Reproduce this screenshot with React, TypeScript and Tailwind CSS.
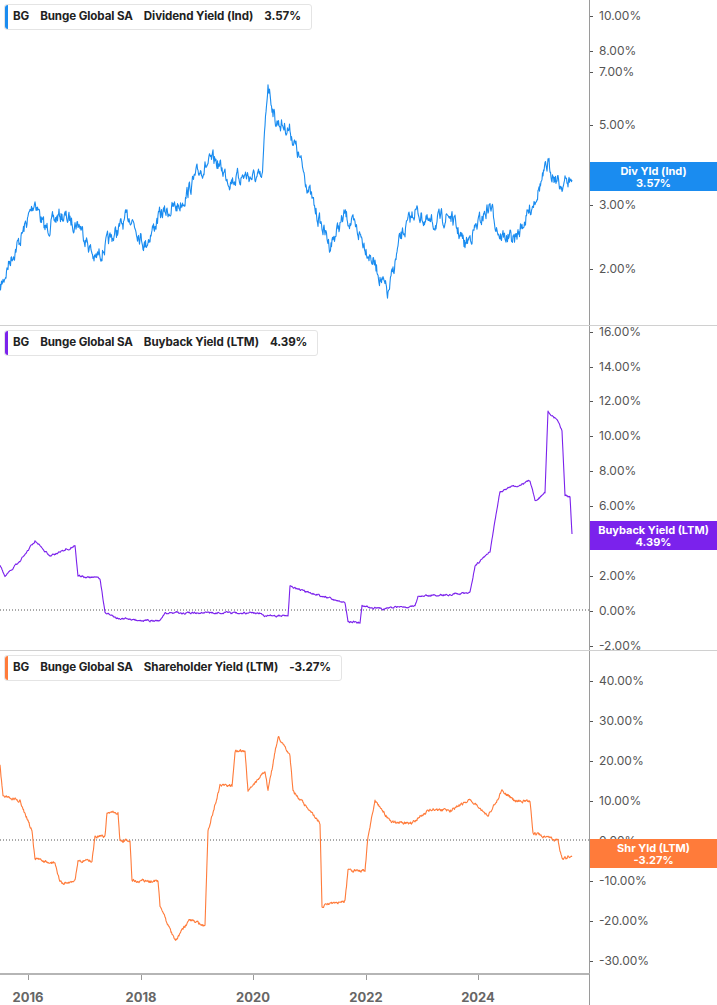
import React from "react";

function rng(seed: number) {
  let s = seed;
  return () => {
    s = (s * 16807) % 2147483647;
    return s / 2147483647;
  };
}

function buildPath(pts: number[][], noise: number, seed: number, keep: number) {
  const r = rng(seed);
  const out: string[] = [];
  let walk = 0;
  for (let i = 0; i < pts.length - 1; i++) {
    const [x0, y0] = pts[i];
    const [x1, y1] = pts[i + 1];
    const steps = Math.max(1, Math.round((x1 - x0) * 2));
    for (let k = 0; k < steps; k++) {
      const t = k / steps;
      walk = walk * keep + (r() - 0.5) * noise;
      const x = x0 + (x1 - x0) * t;
      const y = y0 + (y1 - y0) * t + walk;
      out.push(`${out.length ? "L" : "M"}${x.toFixed(1)},${y.toFixed(1)}`);
    }
  }
  const l = pts[pts.length - 1];
  out.push(`L${l[0]},${l[1]}`);
  return out.join(" ");
}

const p1 = [[0,290],[10,260],[20,240],[35,200],[45,230],[60,215],[80,225],[95,260],[110,240],[130,215],[145,245],[160,215],[180,205],[200,170],[215,160],[230,180],[245,175],[262,180],[268,82],[275,120],[290,130],[300,160],[315,210],[330,245],[345,215],[360,235],[375,265],[388,295],[400,240],[415,210],[430,225],[450,215],[465,245],[490,205],[500,235],[515,240],[530,210],[548,165],[560,185],[572,180]];
const p2 = [[0,565],[5,575],[20,560],[35,540],[50,555],[75,545],[78,575],[100,578],[105,612],[120,618],[160,620],[165,612],[260,612],[265,615],[288,615],[290,585],[310,592],[330,597],[345,602],[348,620],[360,622],[362,605],[380,608],[415,605],[418,595],[470,592],[475,565],[490,550],[500,490],[515,485],[530,480],[535,500],[545,492],[548,410],[558,420],[562,430],[565,495],[570,495],[572,533]].map(([x,y])=>[x,y-325]);
const p3 = [[0,765],[3,795],[20,800],[32,830],[35,858],[55,862],[60,882],[75,880],[78,860],[92,860],[95,835],[105,835],[107,812],[118,812],[120,840],[130,840],[132,880],[158,880],[160,905],[175,940],[190,918],[205,925],[208,830],[220,785],[232,785],[235,750],[245,750],[248,790],[265,770],[268,790],[278,735],[290,755],[293,790],[320,822],[322,905],[345,900],[348,870],[365,870],[368,835],[375,800],[390,820],[410,823],[430,808],[450,810],[470,798],[488,815],[502,790],[515,800],[530,800],[533,832],[558,840],[562,858],[572,855]].map(([x,y])=>[x,y-650]);

type Panel = {
  h: number; color: string; title: string; val: string; badge: string; badgeTop: number;
  labels: [string, number][]; pts: number[][]; noise: number; keep: number; zero?: number;
};

const panels: Panel[] = [
  { h: 325, color: "#1a8cf0", title: "Dividend Yield (Ind)", val: "3.57%", badge: "Div Yld (Ind)", badgeTop: 162,
    labels: [["10.00%",15],["8.00%",50],["7.00%",71],["5.00%",124],["3.00%",204],["2.00%",268]], pts: p1, noise: 12, keep: 0.6 },
  { h: 325, color: "#7b22ec", title: "Buyback Yield (LTM)", val: "4.39%", badge: "Buyback Yield (LTM)", badgeTop: 195,
    labels: [["16.00%",5],["14.00%",40],["12.00%",74],["10.00%",109],["8.00%",144],["6.00%",179],["4.00%",214],["2.00%",249],["0.00%",284],["-2.00%",319]], pts: p2, noise: 1.5, keep: 0.7, zero: 284 },
  { h: 323, color: "#ff7b3a", title: "Shareholder Yield (LTM)", val: "-3.27%", badge: "Shr Yld (LTM)", badgeTop: 188,
    labels: [["40.00%",29],["30.00%",69],["20.00%",109],["10.00%",149],["0.00%",189],["-10.00%",229],["-20.00%",269],["-30.00%",309]], pts: p3, noise: 2.5, keep: 0.5, zero: 189 },
];

export default function App() {
  return (
    <div className="w-[717px] h-[1005px] bg-white overflow-hidden" style={{ fontFamily: "Inter, 'Liberation Sans', sans-serif" }}>
      {panels.map((p, i) => (
        <div key={i} className={`flex ${i > 0 ? "border-t border-[#d0d0d0]" : ""}`} style={{ height: p.h }}>
          <div className="relative w-[590px] border-r border-[#9a9a9a]">
            <svg className="absolute inset-0" width={590} height={p.h}>
              {p.zero !== undefined && <line x1={0} x2={590} y1={p.zero} y2={p.zero} stroke="#555" strokeDasharray="1 2" strokeWidth={1} />}
              <path d={buildPath(p.pts, p.noise, 7 + i * 13, p.keep)} fill="none" stroke={p.color} strokeWidth={1.1} strokeLinejoin="round" />
            </svg>
            <div className="absolute left-[4px] top-[4px] flex items-center h-[26px] bg-white border border-[#e4e4e4] rounded-[3px] pr-[10px] text-[11.6px] font-bold text-[#222] gap-[11px] tracking-[-0.1px]">
              <div className="w-[3px] h-full rounded-l-[3px] -mr-[6px]" style={{ background: p.color }} />
              <span>BG</span>
              <span>Bunge Global SA</span>
              <span>{p.title}</span>
              <span>{p.val}</span>
            </div>
          </div>
          <div className="relative flex-1">
            {p.labels.map(([t, y]) => (
              <div key={t} className="absolute left-0 flex items-center text-[12px] text-[#555]" style={{ top: y - 8 }}>
                <div className="w-[3px] h-[1px] bg-[#555] mr-[6px]" />
                {t}
              </div>
            ))}
            <div className="absolute left-0 right-0 h-[29px] flex flex-col items-center justify-center text-white text-[11px] font-bold leading-[12px]" style={{ top: p.badgeTop, background: p.color }}>
              <span>{p.badge}</span>
              <span>{p.val}</span>
            </div>
          </div>
        </div>
      ))}
      <div className="flex h-[32px]">
        <div className="relative w-[590px] border-t-2 border-r border-[#b5b5b5] border-r-[#9a9a9a] text-[13px] font-bold text-[#666]">
          {[["2016",28],["2018",141],["2020",253],["2022",366],["2024",478]].map(([t,x]) => (
            <div key={t} className="absolute top-0" style={{ left: Number(x) - 20 }}>
              <div className="w-[40px] flex justify-center"><div className="w-[1px] h-[5px] bg-[#999]" /></div>
              <div className="w-[40px] text-center mt-[8px]">{t}</div>
            </div>
          ))}
        </div>
      </div>
    </div>
  );
}
